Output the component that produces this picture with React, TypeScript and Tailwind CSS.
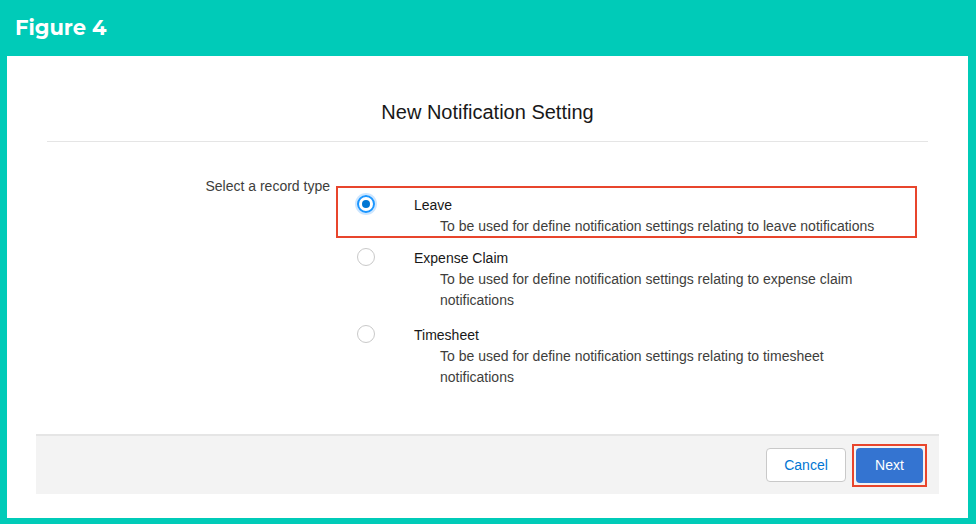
export default function App() {
  const items = [
    { t: "Leave", d: "To be used for define notification settings relating to leave notifications", sel: true },
    { t: "Expense Claim", d: "To be used for define notification settings relating to expense claim notifications" },
    { t: "Timesheet", d: "To be used for define notification settings relating to timesheet notifications" },
  ];
  return (
    <div className="w-[976px] h-[524px] bg-[#00cbb8] flex flex-col pl-[7px] pr-[8px] pb-[6px]" style={{ fontFamily: "'Helvetica Neue', 'Liberation Sans', Arial, sans-serif" }}>
      <div className="h-[56px] flex items-center pl-[8px] text-white text-[21px] font-bold" style={{ fontFamily: "Montserrat, 'Open Sans', sans-serif" }}>Figure 4</div>
      <div className="flex-1 bg-white flex flex-col">
        <div className="h-[86px] flex items-center justify-center text-[20px] text-[#181818] mx-[40px] border-b border-[#e5e5e5] pt-[26px]">New Notification Setting</div>
        <div className="flex pt-[34px] text-[14px] text-[#3e3e3c] h-[292px]">
          <div className="w-[323px] text-right">Select a record type</div>
          <div className="flex flex-col pt-[10px] ml-[6px]">
            {items.map((it, i) => (
              <div key={i} className={`flex w-[581px] pl-[19px] ${it.sel ? "border-2 border-[#e8452c] h-[52px] pt-[7px]" : "h-[77px] pt-[10px] pl-[21px]"}`}>
                <div className={`w-[18px] h-[18px] rounded-full mt-[0px] flex items-center justify-center ${it.sel ? "border-2 border-[#1b96ff] ring-2 ring-[#cde6ff]" : "border border-[#c9c9c9]"}`}>
                  {it.sel && <div className="w-[8px] h-[8px] rounded-full bg-[#0176d3]" />}
                </div>
                <div className="ml-[39px] leading-[21px]">
                  <div className="text-[#181818]">{it.t}</div>
                  <div className="pl-[26px] w-[470px]">{it.d}</div>
                </div>
              </div>
            ))}
          </div>
        </div>
        <div className="mx-[29px] h-[60px] bg-[#f3f3f3] border-t-2 border-[#e5e5e5] flex items-center justify-end pr-[12px] gap-[4px] text-[14px]">
          <button className="w-[80px] h-[34px] bg-white border border-[#c9c9c9] rounded-[4px] text-[#0176d3] mr-[2px]">Cancel</button>
          <div className="border-2 border-[#e8452c] p-[2px]">
            <button className="w-[67px] h-[35px] bg-[#3474d1] rounded-[4px] text-white">Next</button>
          </div>
        </div>
        <div className="flex-1" />
      </div>
    </div>
  );
}
